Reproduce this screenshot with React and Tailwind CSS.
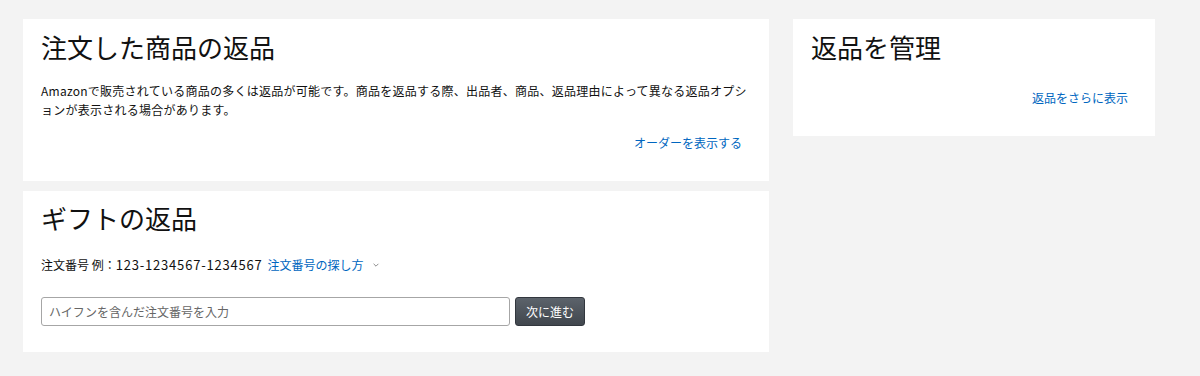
const font = { fontFamily: '"Noto Sans CJK JP", "Noto Sans", sans-serif' };

const Card = ({ className = '', children }) => (
    <div className={`bg-white px-[18px] ${className}`}>{children}</div>
);

export default function App() {
    return (
        <div style={font} className="min-h-[376px] w-[1200px] bg-[#f3f3f3] pl-[23px] pt-[19px] text-[#111]">
            <div className="flex gap-[24px]">
                {/* left column */}
                <div className="flex w-[746px] flex-col gap-[10px]">
                    <Card className="h-[162px] pt-[10px]">
                        <h1 className="text-[26px] leading-[36px] font-normal">注文した商品の返品</h1>
                        <p className="mt-[16px] text-[12px] leading-[19px] tracking-[0.25px]">
                            Amazonで販売されている商品の多くは返品が可能です。商品を返品する際、出品者、商品、返品理由によって異なる返品オプションが表示される場合があります。
                        </p>
                        <div className="mt-[15px] flex justify-end pr-[9px]">
                            <a className="text-[12px] leading-[18px] text-[#0066c0]">オーダーを表示する</a>
                        </div>
                    </Card>
                    <Card className="h-[161px] pt-[9px]">
                        <h2 className="text-[26px] leading-[36px] font-normal">ギフトの返品</h2>
                        <div className="mt-[20px] flex items-center text-[12px] leading-[18px]">
                            <span>注文番号 例：</span>
                            <span className="text-[13px] tracking-[0.8px]">123-1234567-1234567</span>
                            <a className="ml-[5px] text-[#0066c0]">注文番号の探し方</a>
                            <svg className="ml-[8px] h-[8px] w-[8px] text-[#888]" viewBox="0 0 10 10" fill="none" stroke="currentColor" strokeWidth="1.2">
                                <path d="M2 3.5l3 3 3-3" />
                            </svg>
                        </div>
                        <div className="mt-[23px] flex items-center gap-[5px]">
                            <input
                                style={font}
                                placeholder="ハイフンを含んだ注文番号を入力"
                                className="h-[29px] w-[469px] rounded-[3px] border border-[#a6a6a6] px-[7px] text-[12px] placeholder:text-[#666] outline-none"
                            />
                            <button
                                style={font}
                                className="h-[29px] w-[70px] rounded-[3px] border border-[#32373e] bg-gradient-to-b from-[#5c636b] to-[#41474e] text-[12px] text-white"
                            >
                                次に進む
                            </button>
                        </div>
                    </Card>
                </div>
                {/* right column */}
                <div className="w-[362px]">
                    <Card className="h-[117px] pt-[10px]">
                        <h2 className="text-[26px] leading-[36px] font-normal">返品を管理</h2>
                        <div className="mt-[24px] flex justify-end pr-[9px]">
                            <a className="text-[12px] leading-[18px] text-[#0066c0]">返品をさらに表示</a>
                        </div>
                    </Card>
                </div>
            </div>
        </div>
    );
}
